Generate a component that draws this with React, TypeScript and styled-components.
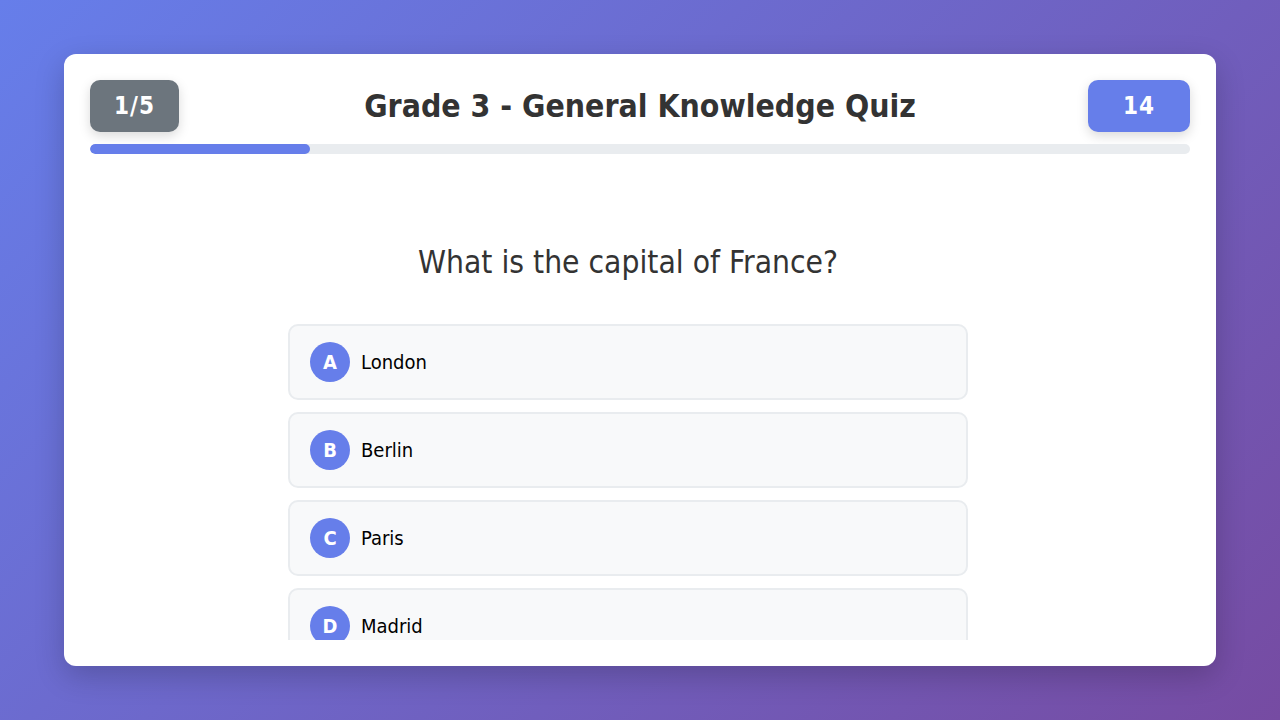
import React from "react";
import styled, { createGlobalStyle } from "styled-components";

const Global = createGlobalStyle`
  * { box-sizing: border-box; }
  html, body { margin: 0; padding: 0; height: 100%; }
  body {
    font-family: "DejaVu Sans Condensed", "DejaVu Sans", sans-serif;
    background: linear-gradient(135deg, #667eea 0%, #764ba2 100%);
    width: 1280px;
    height: 720px;
    overflow: hidden;
  }
`;

const Page = styled.div`
  width: 1280px;
  height: 720px;
  display: flex;
  align-items: center;
  justify-content: center;
`;

const Card = styled.div`
  width: 1152px;
  height: 612px;
  background: #ffffff;
  border-radius: 12px;
  box-shadow: 0 10px 30px rgba(0, 0, 0, 0.2);
  padding: 26px;
  display: flex;
  flex-direction: column;
  overflow: hidden;
`;

const Header = styled.div`
  display: grid;
  grid-template-columns: 1fr auto 1fr;
  align-items: center;
  height: 52px;
`;

const Badge = styled.div<{ $color: string; $w: number; $end?: boolean }>`
  justify-self: ${(p) => (p.$end ? "end" : "start")};
  width: ${(p) => p.$w}px;
  height: 52px;
  border-radius: 10px;
  background: ${(p) => p.$color};
  color: #fff;
  font-weight: bold;
  font-size: 24px;
  letter-spacing: 1px;
  display: flex;
  align-items: center;
  justify-content: center;
  box-shadow: 0 4px 12px rgba(0, 0, 0, 0.15);
`;

const Title = styled.h1`
  margin: 0;
  font-size: 31.7px;
  font-weight: bold;
  color: #333;
  text-align: center;
`;

const Track = styled.div`
  margin-top: 12px;
  height: 10px;
  border-radius: 5px;
  background: #e9ecef;
  overflow: hidden;
  flex-shrink: 0;
`;

const Fill = styled.div`
  height: 100%;
  background: #667eea;
  border-radius: 5px;
`;

const Body = styled.div`
  flex: 1;
  overflow: hidden;
  display: flex;
  flex-direction: column;
  align-items: center;
  padding-top: 88px;
  padding-right: 24px;
`;

const Question = styled.h2`
  margin: 0 0 42px;
  font-size: 31.5px;
  font-weight: normal;
  color: #333;
  line-height: 40px;
`;

const Options = styled.div`
  width: 680px;
  display: flex;
  flex-direction: column;
  gap: 12px;
`;

const Option = styled.div`
  height: 76px;
  flex-shrink: 0;
  background: #f8f9fa;
  border: 2px solid #e9ecef;
  border-radius: 10px;
  padding: 0 20px;
  display: flex;
  align-items: center;
  gap: 11px;
  font-size: 20px;
  color: #000;
`;

const Letter = styled.div`
  width: 40px;
  height: 40px;
  border-radius: 50%;
  background: #667eea;
  color: #fff;
  font-weight: bold;
  font-size: 20px;
  display: flex;
  align-items: center;
  justify-content: center;
`;

const options = ["London", "Berlin", "Paris", "Madrid"];

export default function App() {
  return (
    <>
      <Global />
      <Page>
        <Card>
          <Header>
            <Badge $color="#6c757d" $w={89}>1/5</Badge>
            <Title>Grade 3 - General Knowledge Quiz</Title>
            <Badge $color="#667eea" $w={102} $end>14</Badge>
          </Header>
          <Track>
            <Fill style={{ width: "20%" }} />
          </Track>
          <Body>
            <Question>What is the capital of France?</Question>
            <Options>
              {options.map((o, i) => (
                <Option key={o}>
                  <Letter>{"ABCD"[i]}</Letter>
                  {o}
                </Option>
              ))}
            </Options>
          </Body>
        </Card>
      </Page>
    </>
  );
}
